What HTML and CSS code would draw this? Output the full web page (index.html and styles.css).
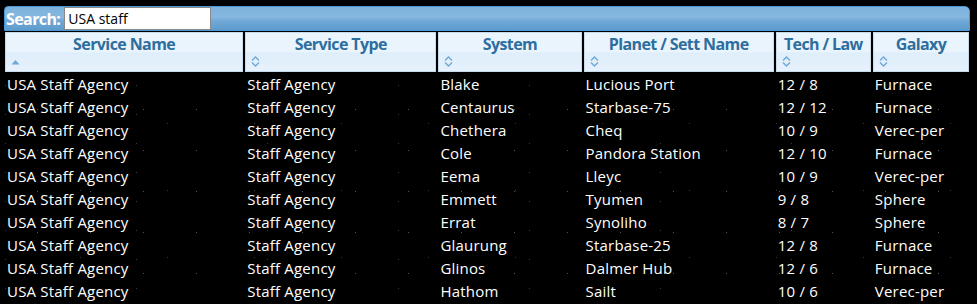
FILE: index.html
```html
<!DOCTYPE html>
<html>
<head>
<meta charset="utf-8">
<link rel="stylesheet" href="styles.css">
</head>
<body>
<div class="wrap">
  <div class="searchbar">
    <label class="search-label">Search:</label>
    <input class="search-input" type="text" value="USA staff">
  </div>
  <table class="grid">
    <colgroup>
      <col class="c1"><col class="c2"><col class="c3"><col class="c4"><col class="c5"><col class="c6">
    </colgroup>
    <thead>
      <tr>
        <th><div class="th-title">Service Name</div><div class="th-sort"><svg class="asc" width="9" height="6" viewBox="0 0 9 6"><path d="M0.5 5.5 L4.5 1 L8.5 5.5 Z" fill="#6da8d8"/></svg></div></th>
        <th><div class="th-title">Service Type</div><div class="th-sort"><svg class="both" width="9" height="11" viewBox="0 0 9 11"><path d="M1 4.5 L4.5 1 L8 4.5 M1 6.5 L4.5 10 L8 6.5" fill="none" stroke="#6da8d8" stroke-width="1.4"/></svg></div></th>
        <th><div class="th-title">System</div><div class="th-sort"><svg class="both" width="9" height="11" viewBox="0 0 9 11"><path d="M1 4.5 L4.5 1 L8 4.5 M1 6.5 L4.5 10 L8 6.5" fill="none" stroke="#6da8d8" stroke-width="1.4"/></svg></div></th>
        <th><div class="th-title">Planet / Sett Name</div><div class="th-sort"><svg class="both" width="9" height="11" viewBox="0 0 9 11"><path d="M1 4.5 L4.5 1 L8 4.5 M1 6.5 L4.5 10 L8 6.5" fill="none" stroke="#6da8d8" stroke-width="1.4"/></svg></div></th>
        <th><div class="th-title">Tech / Law</div><div class="th-sort"><svg class="both" width="9" height="11" viewBox="0 0 9 11"><path d="M1 4.5 L4.5 1 L8 4.5 M1 6.5 L4.5 10 L8 6.5" fill="none" stroke="#6da8d8" stroke-width="1.4"/></svg></div></th>
        <th><div class="th-title">Galaxy</div><div class="th-sort"><svg class="both" width="9" height="11" viewBox="0 0 9 11"><path d="M1 4.5 L4.5 1 L8 4.5 M1 6.5 L4.5 10 L8 6.5" fill="none" stroke="#6da8d8" stroke-width="1.4"/></svg></div></th>
      </tr>
    </thead>
    <tbody>
      <tr><td>USA Staff Agency</td><td>Staff Agency</td><td>Blake</td><td>Lucious Port</td><td>12 / 8</td><td>Furnace</td></tr>
      <tr><td>USA Staff Agency</td><td>Staff Agency</td><td>Centaurus</td><td>Starbase-75</td><td>12 / 12</td><td>Furnace</td></tr>
      <tr><td>USA Staff Agency</td><td>Staff Agency</td><td>Chethera</td><td>Cheq</td><td>10 / 9</td><td>Verec-per</td></tr>
      <tr><td>USA Staff Agency</td><td>Staff Agency</td><td>Cole</td><td>Pandora Station</td><td>12 / 10</td><td>Furnace</td></tr>
      <tr><td>USA Staff Agency</td><td>Staff Agency</td><td>Eema</td><td>Lleyc</td><td>10 / 9</td><td>Verec-per</td></tr>
      <tr><td>USA Staff Agency</td><td>Staff Agency</td><td>Emmett</td><td>Tyumen</td><td>9 / 8</td><td>Sphere</td></tr>
      <tr><td>USA Staff Agency</td><td>Staff Agency</td><td>Errat</td><td>Synoliho</td><td>8 / 7</td><td>Sphere</td></tr>
      <tr><td>USA Staff Agency</td><td>Staff Agency</td><td>Glaurung</td><td>Starbase-25</td><td>12 / 8</td><td>Furnace</td></tr>
      <tr><td>USA Staff Agency</td><td>Staff Agency</td><td>Glinos</td><td>Dalmer Hub</td><td>12 / 6</td><td>Furnace</td></tr>
      <tr><td>USA Staff Agency</td><td>Staff Agency</td><td>Hathom</td><td>Sailt</td><td>10 / 6</td><td>Verec-per</td></tr>
    </tbody>
  </table>
</div>
</body>
</html>
```
FILE: styles.css
```css
html, body {
  margin: 0;
  padding: 0;
}
body {
  background-color: #000;
  background-image:
    radial-gradient(circle, rgba(150,150,150,0.55) 0.6px, transparent 1px),
    radial-gradient(circle, rgba(120,120,120,0.45) 0.6px, transparent 1px),
    radial-gradient(circle, rgba(170,170,170,0.35) 0.6px, transparent 1px);
  background-size: 53px 41px, 87px 67px, 131px 29px;
  background-position: 11px 7px, 37px 23px, 71px 13px;
  font-family: "Open Sans", "Noto Sans", sans-serif;
  color: #fff;
  height: 304px;
  overflow: hidden;
}
.wrap {
  padding: 6px 0 0 4px;
  width: 966px;
}
.searchbar {
  height: 25px;
  box-sizing: border-box;
  border: 1px solid #4a97d6;
  border-radius: 4px 5px 0 0;
  background: linear-gradient(to bottom, #7eb3de 0%, #86b7df 45%, #6fa8d6 60%, #5e9ccd 100%);
  display: flex;
  align-items: center;
  padding-left: 1px;
}
.search-label {
  font-weight: bold;
  font-size: 16px;
  color: #fff;
  letter-spacing: -0.6px;
  margin-right: 4px;
}
.search-input {
  width: 147px;
  height: 23px;
  box-sizing: border-box;
  border: 1px solid #888;
  margin: 0;
  padding: 0 3px;
  font-family: "Open Sans", "Noto Sans", sans-serif;
  font-size: 14px;
  color: #000;
  background: #fff;
  outline: none;
}
.grid {
  border-collapse: separate;
  border-spacing: 2px 0;
  margin-left: -1px;
  margin-top: 1px;
  table-layout: fixed;
  width: 968px;
}
.c1 { width: 238px; }
.c2 { width: 191px; }
.c3 { width: 143px; }
.c4 { width: 190px; }
.c5 { width: 95px; }
.c6 { width: 96px; }
.grid th {
  padding: 0;
  height: 40px;
  box-sizing: border-box;
  border: 1px solid #c5dbec;
  background: linear-gradient(to bottom, #eaf4fd 0%, #eaf4fd 50%, #dfeefb 52%, #e6f1fc 100%);
  color: #2e6e9e;
  font-weight: bold;
  font-size: 16px;
  vertical-align: top;
  font-family: "Open Sans", "Noto Sans", sans-serif;
}
.th-title {
  height: 20px;
  line-height: 22px;
  text-align: center;
  letter-spacing: -0.6px;
}
.th-sort {
  height: 18px;
  text-align: left;
  padding-left: 3px;
  position: relative;
}
.th-sort svg {
  position: absolute;
  left: 5px;
}
.th-sort svg.asc { top: 6px; }
.th-sort svg.both { top: 3px; }
.grid td {
  height: 23px;
  padding: 1px 0 0 2px;
  box-sizing: border-box;
  font-size: 15px;
  line-height: 22px;
  color: #fff;
  white-space: nowrap;
  overflow: hidden;
  letter-spacing: 0.2px;
}
```
